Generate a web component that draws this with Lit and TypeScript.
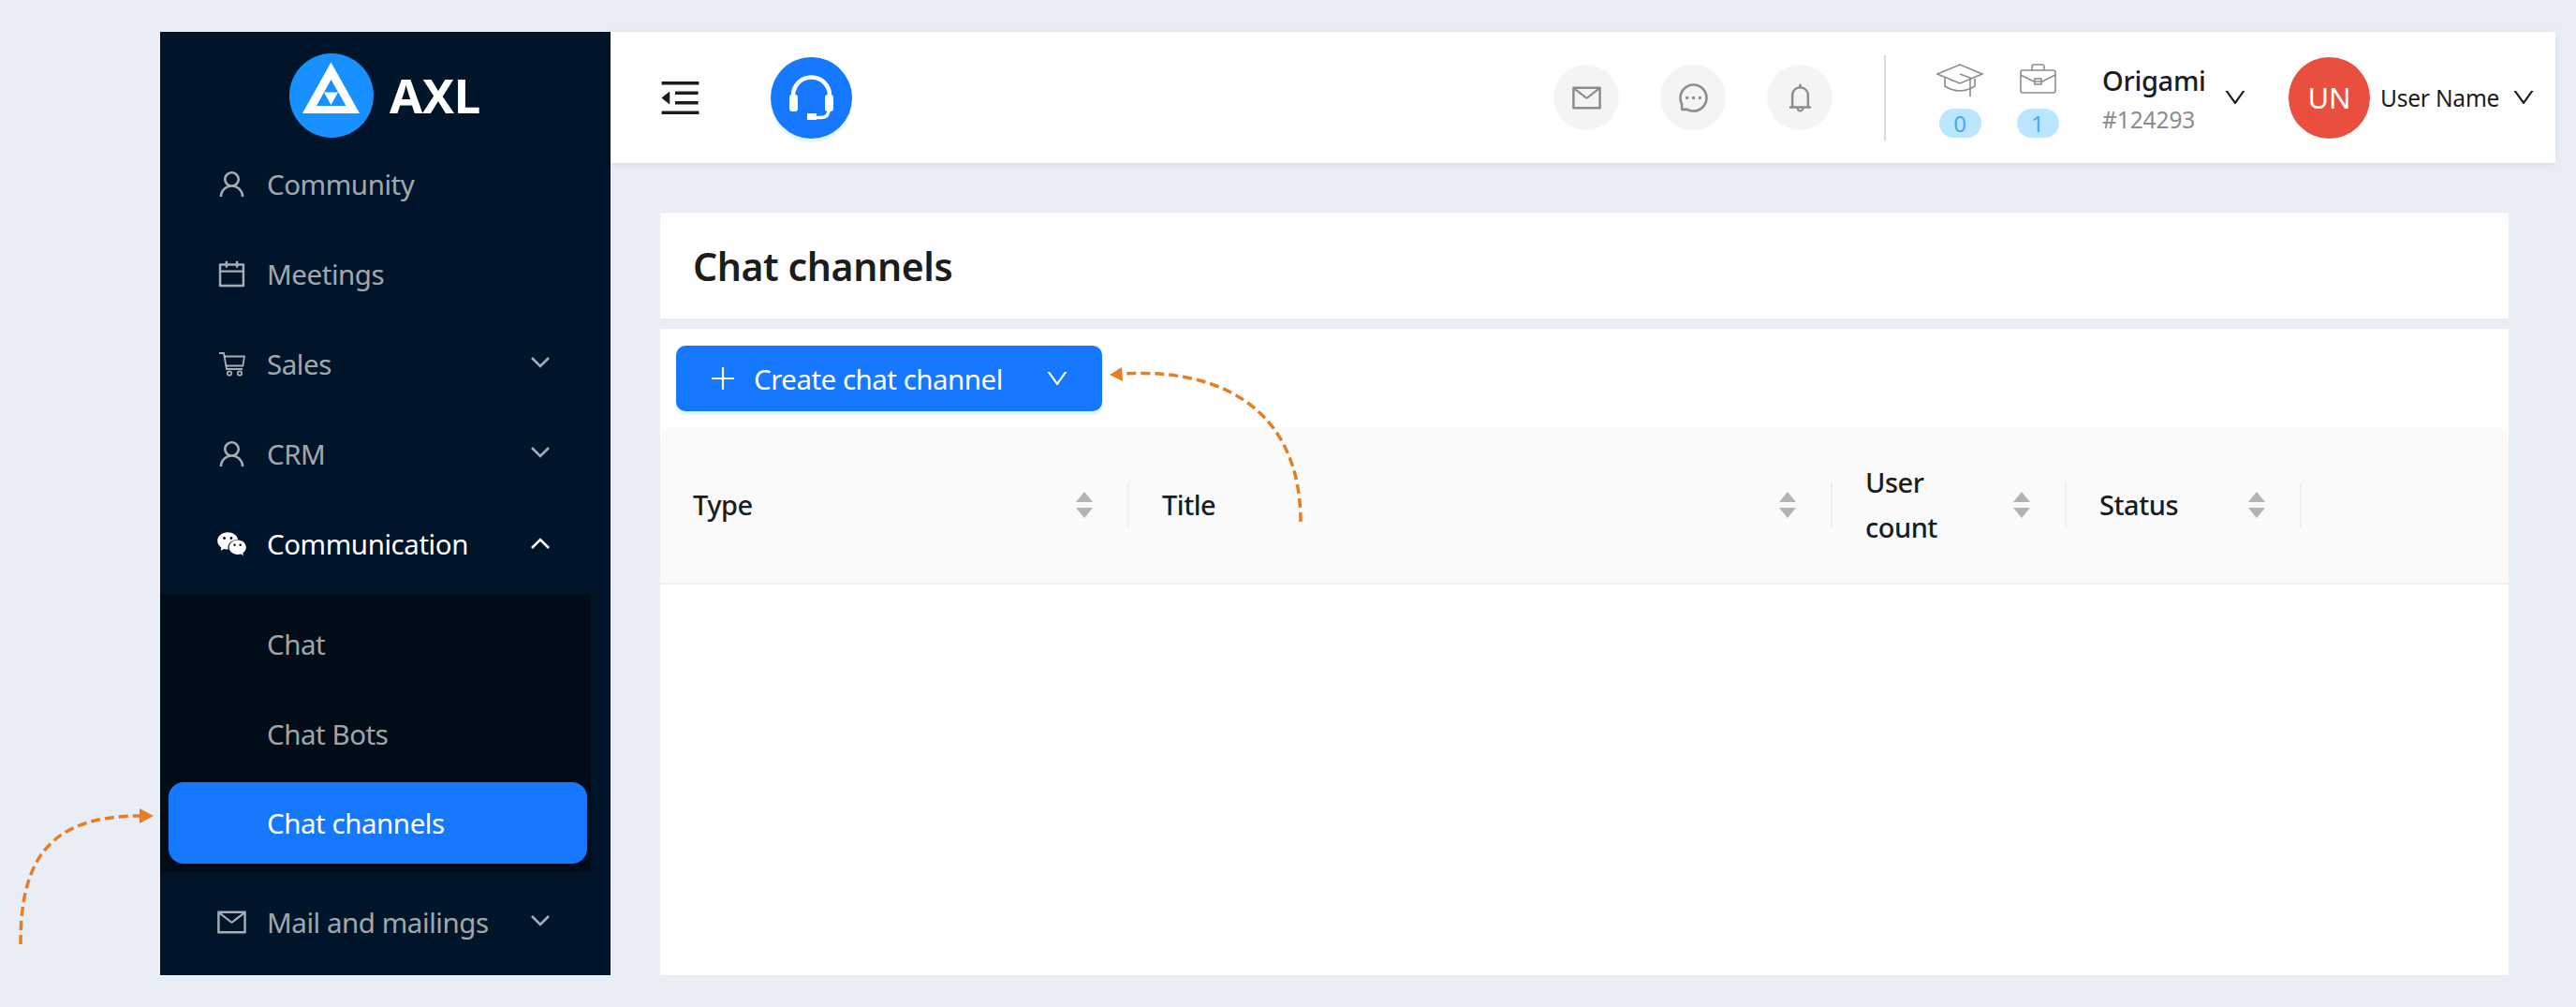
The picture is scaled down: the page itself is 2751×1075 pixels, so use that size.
import { LitElement, css, html, svg } from "lit"
import { customElement } from "lit/decorators.js"

// ant design outlined icons, viewBox 0 0 1024 1024
const P = {
  user: "M858.5 763.6a374 374 0 0 0-80.6-119.5 375.63 375.63 0 0 0-119.5-80.6c-.4-.2-.8-.3-1.2-.5C719.5 518 760 444.7 760 362c0-137-111-248-248-248S264 225 264 362c0 82.7 40.5 156 102.8 201.1-.4.2-.8.3-1.2.5-44.8 18.9-85 46-119.5 80.6a375.63 375.63 0 0 0-80.6 119.5A371.7 371.7 0 0 0 136 901.8a8 8 0 0 0 8 8.2h60c4.4 0 7.9-3.5 8-7.8 2-77.2 33-149.5 87.8-204.3 56.7-56.7 132-87.9 212.2-87.9s155.5 31.2 212.2 87.9C779 752.7 810 825 812 902.2c.1 4.4 3.6 7.8 8 7.8h60a8 8 0 0 0 8-8.2c-1-47.8-10.9-94.3-29.5-138.2zM512 534c-45.9 0-89.1-17.9-121.6-50.4S340 407.9 340 362c0-45.9 17.9-89.1 50.4-121.6S466.1 190 512 190s89.1 17.9 121.6 50.4S684 316.1 684 362c0 45.9-17.9 89.1-50.4 121.6S557.9 534 512 534z",
  calendar: "M880 184H712v-64c0-4.4-3.6-8-8-8h-56c-4.4 0-8 3.6-8 8v64H384v-64c0-4.4-3.6-8-8-8h-56c-4.4 0-8 3.6-8 8v64H144c-17.7 0-32 14.3-32 32v664c0 17.7 14.3 32 32 32h736c17.7 0 32-14.3 32-32V216c0-17.7-14.3-32-32-32zm-40 656H184V460h656v380zM184 392V256h128v48c0 4.4 3.6 8 8 8h56c4.4 0 8-3.6 8-8v-48h256v48c0 4.4 3.6 8 8 8h56c4.4 0 8-3.6 8-8v-48h128v136H184z",
  wechat: "M690.1 377.4c5.9 0 11.8.2 17.6.5-24.4-128.7-158.3-227.1-319.9-227.1C209 150.8 64 271.4 64 420.2c0 81.1 43.6 154.2 111.9 203.6a21.5 21.5 0 0 1 9.1 17.6c0 2.4-.5 4.6-1.1 6.9-5.5 20.3-14.2 52.8-14.6 54.3-.7 2.6-1.7 5.2-1.7 7.9 0 5.9 4.8 10.8 10.8 10.8 2.3 0 4.2-.9 6.2-2l70.9-40.9c5.3-3.1 11-5 17.2-5 3.2 0 6.4.5 9.5 1.4 33.1 9.5 68.8 14.8 105.7 14.8 6 0 11.9-.1 17.8-.4-7.1-21-10.9-43.1-10.9-66 0-135.8 132.2-245.8 295.3-245.8zm-194.3-86.5c23.8 0 43.2 19.3 43.2 43.1s-19.3 43.1-43.2 43.1c-23.8 0-43.2-19.3-43.2-43.1s19.4-43.1 43.2-43.1zm-215.9 86.2c-23.8 0-43.2-19.3-43.2-43.1s19.3-43.1 43.2-43.1 43.2 19.3 43.2 43.1-19.4 43.1-43.2 43.1zm586.8 415.6c57.2-41.3 93.7-102.4 93.7-170.3 0-124-118.7-224.6-265.1-224.6S430 498 430 622s118.7 224.6 265.1 224.6c30.2 0 59.4-4.4 86.5-12.4 2.5-.8 5.2-1.2 7.9-1.2 5.1 0 9.8 1.6 14.1 4.1l58 33.4c1.6.9 3.2 1.6 5.1 1.6a9 9 0 0 0 9-9c0-2.2-.9-4.4-1.4-6.6-.3-1.2-7.6-28.3-12.2-45.3-.5-1.9-.9-3.8-.9-5.7.1-5.9 3.1-11.2 7.6-14.5zM600.2 587.2c-19.9 0-36-16.1-36-35.9 0-19.8 16.1-35.9 36-35.9s36 16.1 36 35.9c0 19.8-16.2 35.9-36 35.9zm179.9 0c-19.9 0-36-16.1-36-35.9 0-19.8 16.1-35.9 36-35.9s36 16.1 36 35.9a36.08 36.08 0 0 1-36 35.9z",
  mail: "M928 160H96c-17.7 0-32 14.3-32 32v640c0 17.7 14.3 32 32 32h832c17.7 0 32-14.3 32-32V192c0-17.7-14.3-32-32-32zm-40 110.8V792H136V270.8l-27.6-21.5 39.3-50.5 42.8 33.3h643.1l42.8-33.3 39.3 50.5-27.7 21.5zM833.6 232L512 482 190.4 232l-42.8-33.3-39.3 50.5 27.6 21.5 341.6 265.6a55.99 55.99 0 0 0 68.7 0L888 270.8l27.6-21.5-39.3-50.5-42.7 33.2z",
  down: "M884 256h-75c-5.1 0-9.9 2.5-12.9 6.6L512 654.2 227.9 262.6c-3-4.1-7.8-6.6-12.9-6.6h-75c-6.5 0-10.3 7.4-6.5 12.7l352.6 486.1c12.8 17.6 39 17.6 51.7 0l352.6-486.1c3.9-5.3.1-12.7-6.4-12.7z",
  fold: "M408 442h480c4.4 0 8-3.6 8-8v-56c0-4.4-3.6-8-8-8H408c-4.4 0-8 3.6-8 8v56c0 4.4 3.6 8 8 8zm-8 204c0 4.4 3.6 8 8 8h480c4.4 0 8-3.6 8-8v-56c0-4.4-3.6-8-8-8H408c-4.4 0-8 3.6-8 8v56zm504-486H120c-4.4 0-8 3.6-8 8v56c0 4.4 3.6 8 8 8h784c4.4 0 8-3.6 8-8v-56c0-4.4-3.6-8-8-8zm0 632H120c-4.4 0-8 3.6-8 8v56c0 4.4 3.6 8 8 8h784c4.4 0 8-3.6 8-8v-56c0-4.4-3.6-8-8-8zM115.4 518.9L271.7 642c5.8 4.6 14.4.5 14.4-6.9V388.9c0-7.4-8.5-11.5-14.4-6.9L115.4 505.1a8.74 8.74 0 0 0 0 13.8z",
  message: "M464 512a48 48 0 1 0 96 0 48 48 0 1 0-96 0zm200 0a48 48 0 1 0 96 0 48 48 0 1 0-96 0zm-400 0a48 48 0 1 0 96 0 48 48 0 1 0-96 0zm661.2-173.6c-22.6-53.7-55-101.9-96.3-143.3a444.35 444.35 0 0 0-143.3-96.3C630.6 75.7 572.2 64 512 64h-2c-60.6.3-119.3 12.3-174.5 35.9a445.35 445.35 0 0 0-142 96.5c-40.9 41.3-73 89.3-95.2 142.8-23 55.4-34.6 114.3-34.3 174.9A449.4 449.4 0 0 0 112 714v152a46 46 0 0 0 46 46h152.1A449.4 449.4 0 0 0 510 960h2.1c59.9 0 118-11.6 172.7-34.3a444.48 444.48 0 0 0 142.8-95.2c41.3-40.9 73.8-88.7 96.5-142 23.6-55.2 35.6-113.9 35.9-174.5.3-60.9-11.5-120-34.8-175.6zm-151.1 438C704 845.8 611 884 512 884h-1.7c-60.3-.3-120.2-15.3-173.1-43.5l-8.4-4.5H188V695.2l-4.5-8.4C155.3 633.9 140.3 574 140 513.7c-.4-99.7 37.7-193.3 107.6-263.8 69.8-70.5 163.1-109.5 262.8-109.9h1.7c50 0 98.5 9.7 144.2 28.9 44.6 18.7 84.6 45.6 119 80 34.3 34.3 61.3 74.4 80 119 19.4 46.2 29.1 95.2 28.9 145.8-.6 99.6-39.7 192.9-110.1 262.7z",
  bell: "M816 768h-24V428c0-141.1-104.3-257.7-240-277.1V112c0-22.1-17.9-40-40-40s-40 17.9-40 40v38.9c-135.7 19.4-240 136-240 277.1v340h-24c-17.7 0-32 14.3-32 32v32c0 4.4 3.6 8 8 8h216c0 61.8 50.2 112 112 112s112-50.2 112-112h216c4.4 0 8-3.6 8-8v-32c0-17.7-14.3-32-32-32zM512 888c-26.5 0-48-21.5-48-48h96c0 26.5-21.5 48-48 48zM304 768V428c0-55.6 21.6-107.8 60.9-147.1S456.4 220 512 220c55.6 0 107.8 21.6 147.1 60.9S720 372.4 720 428v340H304z",
}

const icon = (name: keyof typeof P, size: number) => html`
  <svg class="ic" width=${size} height=${size} viewBox="0 0 1024 1024" fill="currentColor"><path d=${P[name]}></path></svg>
`

const cart = html`
  <svg class="ic" width="35" height="35" viewBox="0 0 35 35" fill="none" stroke="currentColor" stroke-width="1.8">
    <path d="M4 6h5l3 17h17"></path>
    <path d="M9.6 9.5h21.4l-1.6 10h-18"></path>
    <circle cx="15" cy="27.5" r="2.2"></circle>
    <circle cx="26" cy="27.5" r="2.2"></circle>
  </svg>
`

const chevronUp = html`
  <svg class="chev" width="28" height="28" viewBox="0 0 28 28" fill="none" stroke="currentColor" stroke-width="2.6"><path d="M5 18l9-9 9 9"></path></svg>
`
const chevronDown = html`
  <svg class="chev dn" width="28" height="28" viewBox="0 0 28 28" fill="none" stroke="currentColor" stroke-width="2.6"><path d="M5 10l9 9 9-9"></path></svg>
`

type MenuItem = { label: string; icon?: unknown; caret?: "up" | "down"; open?: boolean }

const menu: MenuItem[] = [
  { label: "Community", icon: icon("user", 35) },
  { label: "Meetings", icon: icon("calendar", 35) },
  { label: "Sales", icon: cart, caret: "down" },
  { label: "CRM", icon: icon("user", 35), caret: "down" },
  { label: "Communication", icon: icon("wechat", 35), caret: "up", open: true },
]

const subItems = ["Chat", "Chat Bots", "Chat channels"]

const columns = [
  { label: "Type", sort: true },
  { label: "Title", sort: true },
  { label: "User count", sort: true },
  { label: "Status", sort: true },
  { label: "", sort: false },
]

@customElement("app-root")
export class AppRoot extends LitElement {
  static styles = css`
    :host {
      display: block;
      position: relative;
      width: 2751px;
      height: 1075px;
      overflow: hidden;
      background: #e9eef6;
      font-family: "Noto Sans", "Open Sans", sans-serif;
      color: #1c1c1c;
    }
    .shell {
      display: flex;
      box-sizing: border-box;
      height: 100%;
      padding: 34px 22px 34px 171px;
    }
    .ic { display: block; flex: none; }

    /* sidebar */
    .side {
      width: 481px;
      flex: none;
      background: #001529;
      color: rgba(255, 255, 255, 0.65);
      font-size: 29.5px;
      letter-spacing: -0.45px;
    }
    .logo {
      display: flex;
      align-items: center;
      height: 114px;
      padding: 22px 0 0 138px;
      box-sizing: border-box;
      gap: 17px;
      color: #fff;
      font-size: 51px;
      font-weight: 700;
      letter-spacing: -0.3px;
    }
    .logo span { margin-top: -3px; }
    .row {
      display: flex;
      align-items: center;
      height: 96.2px;
      padding: 0 61px 0 59px;
    }
    .row .label { margin-left: 20px; flex: 1; }
    .row.open { color: #fff; }
    .chev { display: block; flex: none; }
    .chev.dn { margin-top: -5px; }
    .sub { background: #000c17; width: 460px; margin: 5px 0; padding: 6px 0 9px; }
    .sub .row { height: 96px; padding-left: 114px; }
    .sub .row .label { margin-left: 0; }
    .sub .row.active {
      height: 87px;
      margin: 3px 4px 0 9px;
      padding-left: 105px;
      border-radius: 16px;
      background: #1677ff;
      color: #fff;
    }

    /* top bar */
    .main { flex: 1; display: flex; flex-direction: column; min-width: 0; }
    .top {
      display: flex;
      align-items: center;
      height: 140px;
      flex: none;
      background: #fff;
      padding-left: 49px;
      box-shadow: 0 2px 8px rgba(0, 0, 0, 0.07);
    }
    .top .fold { color: #1c1c1c; }
    .support {
      width: 87px;
      height: 87px;
      margin-left: 71px;
      border-radius: 50%;
      background: #1677ff;
      box-shadow: 0 4px 0 #e6f4ff;
    }
    .spacer { flex: 1; }
    .round {
      display: flex;
      align-items: center;
      justify-content: center;
      width: 70px;
      height: 70px;
      margin-left: 44px;
      border-radius: 50%;
      background: #f4f4f4;
      color: #8c8c8c;
    }
    .vline { width: 2px; height: 91px; margin: 0 54px 0 55px; background: #d9d9d9; }
    .stat {
      display: flex;
      flex-direction: column;
      align-items: center;
      width: 50px;
      height: 80px;
      padding-top: 4px;
      box-sizing: border-box;
      position: relative;
      color: #8c8c8c;
    }
    .stat + .stat { margin-left: 33px; }
    .pill {
      position: absolute;
      top: 52px;
      left: 2.5px;
      width: 45px;
      height: 31px;
      border-radius: 16px;
      background: #bae7ff;
      color: #40a9ff;
      font-size: 24px;
      line-height: 31px;
      text-align: center;
    }
    .org { width: 118px; margin-left: 44px; }
    .org b { display: block; font-weight: 500; font-size: 29px; line-height: 40px; letter-spacing: -0.3px; }
    .org span { display: block; margin-top: 7px; font-size: 24.5px; line-height: 30px; color: #8c8c8c; letter-spacing: -0.1px; }
    .caret { color: #1c1c1c; }
    .org + .caret { margin-left: 10px; }
    .avatar {
      display: flex;
      align-items: center;
      justify-content: center;
      width: 87px;
      height: 87px;
      margin-left: 43px;
      border-radius: 50%;
      background: #e94f3f;
      color: #fff;
      font-size: 31px;
    }
    .uname { width: 139px; margin-left: 11px; font-size: 24.5px; letter-spacing: -0.2px; white-space: nowrap; }
    .endgap { width: 20px; flex: none; }

    /* content */
    .body { flex: 1; display: flex; flex-direction: column; gap: 11px; padding: 53px 50px 0 53px; min-height: 0; }
    .title {
      display: flex;
      align-items: center;
      flex: none;
      height: 113px;
      padding-left: 35px;
      background: #fff;
      font-size: 41px;
      font-weight: 600;
      letter-spacing: -0.4px;
    }
    .panel { flex: 1; background: #fff; padding-top: 18px; }
    .create {
      display: flex;
      align-items: center;
      box-sizing: border-box;
      width: 455px;
      height: 70px;
      margin-left: 17px;
      padding-left: 37px;
      border: 0;
      border-radius: 10px;
      background: #1677ff;
      box-shadow: 0 4px 0 #e6f4ff;
      color: #fff;
      font: inherit;
      font-size: 29.5px;
      letter-spacing: -0.5px;
    }
    .create .txt { margin-left: 20px; width: 310px; text-align: left; white-space: nowrap; }
    .head {
      display: grid;
      grid-template-columns: 501px 751px 250px 251px 1fr;
      align-items: center;
      height: 166px;
      margin-top: 17px;
      border-radius: 14px 14px 0 0;
      border-bottom: 2px solid #f0f0f0;
      background: #fafafa;
      font-size: 29px;
      font-weight: 500;
      letter-spacing: -0.5px;
    }
    .cell {
      display: flex;
      align-items: center;
      position: relative;
      box-sizing: border-box;
      height: 48px;
      padding: 0 39px 0 35px;
    }
    .cell .name { flex: 1; line-height: 48px; padding-right: 20px; }
    .cell::after {
      content: "";
      position: absolute;
      top: 0;
      right: 0;
      width: 2px;
      height: 48px;
      background: #f0f0f0;
    }
    .cell.last::after { display: none; }
    .sorter { display: block; flex: none; }

    /* annotation arrows */
    .arrows { position: absolute; inset: 0; pointer-events: none; }
  `

  renderSupport () {
    return html`
      <div class="support">
        <svg width="87" height="87" viewBox="0 0 87 87" fill="none" stroke="#fff">
          <path d="M24 42v-1a19.5 19.5 0 0 1 39 0v1" stroke-width="4.5"></path>
          <rect x="20" y="40" width="9" height="18" rx="3" fill="#fff" stroke="none"></rect>
          <rect x="58" y="40" width="9" height="18" rx="3" fill="#fff" stroke="none"></rect>
          <path d="M62 56c0 6-3 8.500-8 8.500h-8" stroke-width="3.500"></path>
          <rect x="39" y="60" width="10" height="7" fill="#fff" stroke="none"></rect>
        </svg>
      </div>
    `
  }

  renderSorter () {
    return html`
      <svg class="sorter" width="18" height="28" viewBox="0 0 18 28" fill="#b3b3b3">
        <path d="M9 0l9 11H0z"></path>
        <path d="M9 28L0 17h18z"></path>
      </svg>
    `
  }

  render () {
    return html`
      <div class="shell">
        <aside class="side">
          <div class="logo">
            <svg width="90" height="90" viewBox="0 0 90 90">
              <circle cx="45" cy="45" r="45" fill="#1890ff"></circle>
              <path d="M44.5 9.400L75 64H14z" fill="#fff"></path>
              <path d="M44.500 28L60.500 56H29z" fill="#1890ff"></path>
              <path d="M37 41.500h15L44.500 55z" fill="#fff"></path>
            </svg>
            <span>AXL</span>
          </div>
          ${menu.map(m => html`
            <div class="row ${m.open ? "open" : ""}">
              ${m.icon}
              <span class="label">${m.label}</span>
              ${m.caret === "down" ? chevronDown : m.caret === "up" ? chevronUp : ""}
            </div>
          `)}
          <div class="sub">
            ${subItems.map(s => html`
              <div class="row ${s === "Chat channels" ? "active" : ""}"><span class="label">${s}</span></div>
            `)}
          </div>
          <div class="row">
            ${icon("mail", 35)}
            <span class="label">Mail and mailings</span>
            ${chevronDown}
          </div>
        </aside>

        <div class="main">
          <header class="top">
            <span class="fold">${icon("fold", 51)}</span>
            ${this.renderSupport()}
            <div class="spacer"></div>
            <div class="round">${icon("mail", 35)}</div>
            <div class="round">${icon("message", 35)}</div>
            <div class="round">${icon("bell", 35)}</div>
            <div class="vline"></div>
            <div class="stat">
              <svg width="50" height="37" viewBox="0 0 50 37" fill="none" stroke="currentColor" stroke-width="1.600">
                <path d="M25 1l24 10-24 10L1 11z"></path>
                <path d="M25 11l11 4v20"></path>
                <path d="M9 14v10q16 10 32 0V16"></path>
              </svg>
              <span class="pill">0</span>
            </div>
            <div class="stat">
              <svg width="39" height="33" viewBox="0 0 39 33" fill="none" stroke="currentColor" stroke-width="1.600">
                <rect x="1" y="7" width="37" height="24" rx="2"></rect>
                <path d="M13 7V3q0-2 2-2h9q2 0 2 2v4"></path>
                <path d="M1 12l14 7h9l14-7"></path>
                <rect x="16" y="16" width="7" height="6"></rect>
              </svg>
              <span class="pill">1</span>
            </div>
            <div class="org">
              <b>Origami</b>
              <span>#124293</span>
            </div>
            <span class="caret">${icon("down", 28)}</span>
            <div class="avatar">UN</div>
            <div class="uname">User Name</div>
            <span class="caret">${icon("down", 28)}</span>
            <div class="endgap"></div>
          </header>

          <div class="body">
            <div class="title">Chat channels</div>
            <section class="panel">
              <button class="create">
                <svg width="26" height="26" viewBox="0 0 26 26" stroke="#fff" stroke-width="2.200"><path d="M13 1v24M1 13h24"></path></svg>
                <span class="txt">Create chat channel</span>
                <span>${icon("down", 28)}</span>
              </button>
              <div class="head">
                ${columns.map(c => html`
                  <div class="cell ${c.sort ? "" : "last"}">
                    <span class="name">${c.label}</span>
                    ${c.sort ? this.renderSorter() : ""}
                  </div>
                `)}
              </div>
            </section>
          </div>
        </div>
      </div>

      <svg class="arrows" width="2751" height="1075" fill="none">
        ${svg`
          <path d="M22 1008C22 920 50 871 150 871" stroke="#e67e22" stroke-width="3.5" stroke-dasharray="10 5"></path>
          <path d="M164 871l-15-8v16z" fill="#e67e22"></path>
          <path d="M1389 557C1389 450 1320 392 1198 399" stroke="#e67e22" stroke-width="3.5" stroke-dasharray="10 5"></path>
          <path d="M1185 400l13-8 1 15z" fill="#e67e22"></path>
        `}
      </svg>
    `
  }
}
